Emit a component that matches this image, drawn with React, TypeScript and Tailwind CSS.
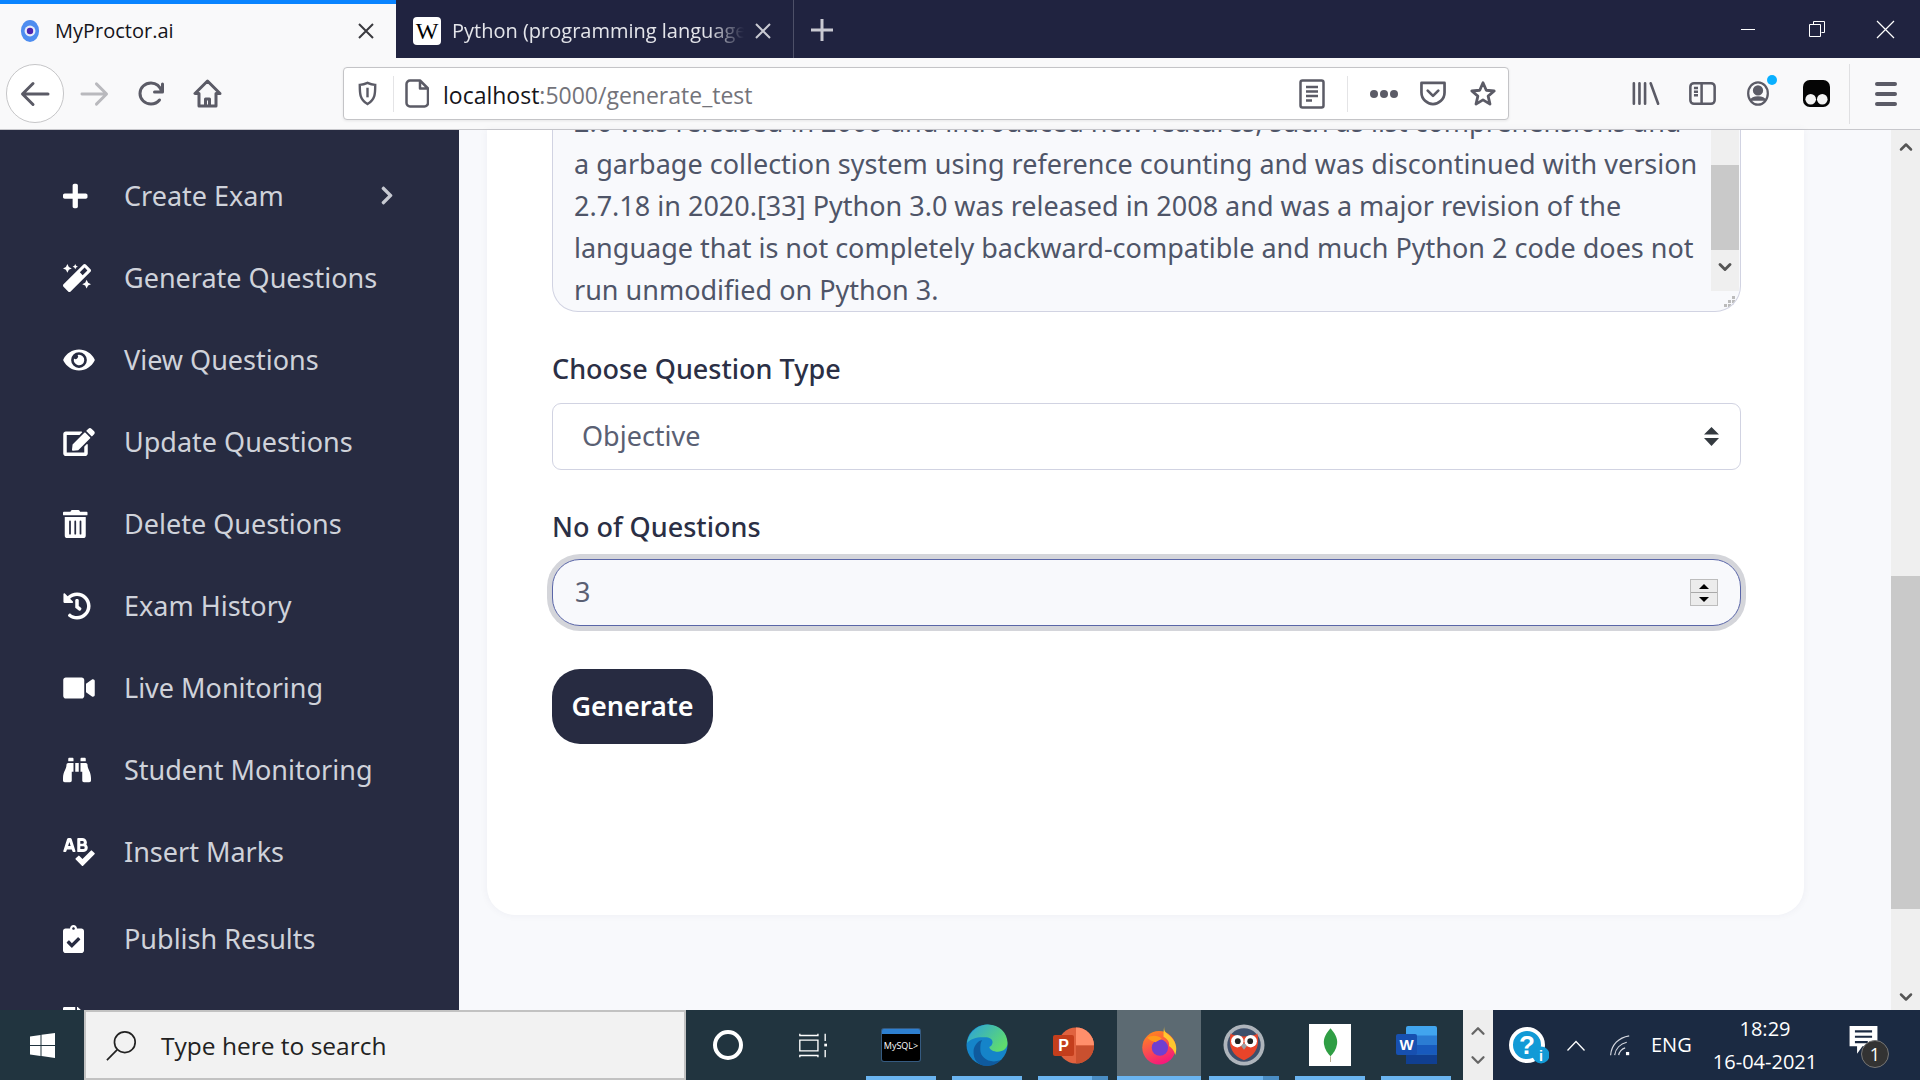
import type { ReactNode } from "react";
import {
  FaPlus,
  FaMagic,
  FaEye,
  FaEdit,
  FaTrashAlt,
  FaHistory,
  FaVideo,
  FaBinoculars,
  FaSpellCheck,
  FaClipboardCheck,
  FaChevronRight,
  FaFileAlt,
} from "react-icons/fa";
import { ChevronUp, ChevronDown } from "lucide-react";

const font = "font-['Noto_Sans','Open_Sans',sans-serif]";

const menu = [
  { icon: FaPlus, size: "h-[28px] w-[24.5px]", label: "Create Exam", arrow: true },
  { icon: FaMagic, size: "h-[28px] w-[28px]", label: "Generate Questions" },
  { icon: FaEye, size: "h-[28px] w-[32px]", label: "View Questions" },
  { icon: FaEdit, size: "h-[28px] w-[32px]", label: "Update Questions" },
  { icon: FaTrashAlt, size: "h-[28px] w-[24.5px]", label: "Delete Questions" },
  { icon: FaHistory, size: "h-[28px] w-[28px]", label: "Exam History" },
  { icon: FaVideo, size: "h-[28px] w-[32px]", label: "Live Monitoring" },
  { icon: FaBinoculars, size: "h-[28px] w-[28px]", label: "Student Monitoring" },
  { icon: FaSpellCheck, size: "h-[28px] w-[32px]", label: "Insert Marks" },
];

const lines = [
  "2.6 was released in 2000 and introduced new features, such as list comprehensions and",
  "a garbage collection system using reference counting and was discontinued with version",
  "2.7.18 in 2020.[33] Python 3.0 was released in 2008 and was a major revision of the",
  "language that is not completely backward-compatible and much Python 2 code does not",
  "run unmodified on Python 3.",
];

function TabBar() {
  return (
    <div className="flex h-[58px] shrink-0 items-stretch bg-[#202340] font-['Open_Sans',sans-serif] text-[20px]">
      <div className="flex w-[396px] items-center border-t-[4px] border-[#0a84ff] bg-[#f9f9fa] pl-[20px] pr-[21px] text-[#15141a]">
        <svg width="20" height="24" viewBox="0 0 22 26">
          <ellipse cx="11" cy="13" rx="10" ry="12" fill="#4d8df0" />
          <circle cx="11" cy="13" r="6" fill="#e8edf8" />
          <circle cx="11" cy="13" r="3.5" fill="#4a22b0" />
        </svg>
        <span className="ml-[15px] flex-1">MyProctor.ai</span>
        <svg width="18" height="18" viewBox="0 0 18 18" stroke="#3a3a3f" strokeWidth="2">
          <path d="M2 2l14 14M16 2L2 16" />
        </svg>
      </div>
      <div className="flex w-[398px] items-center border-r border-[#4d5068] pl-[17px] pr-[20px] pt-[3px] text-[#e4e5ea]">
        <div className="flex h-[28px] w-[28px] items-center justify-center rounded-[4px] bg-white font-['Liberation_Serif',serif] text-[24px] text-black">
          W
        </div>
        <span className="ml-[11px] w-[292px] overflow-hidden whitespace-nowrap [mask-image:linear-gradient(to_right,black_88%,transparent)]">
          Python (programming language) - Wikipedia
        </span>
        <svg className="ml-[10px]" width="18" height="18" viewBox="0 0 18 18" stroke="#c9cad2" strokeWidth="2">
          <path d="M2 2l14 14M16 2L2 16" />
        </svg>
      </div>
      <div className="flex w-[56px] items-center justify-center pt-[2px]">
        <svg width="24" height="24" viewBox="0 0 24 24" stroke="#c9cad2" strokeWidth="3">
          <path d="M12 1v22M1 12h22" />
        </svg>
      </div>
      <div className="ml-auto flex items-center">
        <div className="flex w-[69px] justify-center">
          <div className="h-px w-[14px] bg-white" />
        </div>
        <div className="flex w-[69px] justify-center">
          <svg width="16" height="16" viewBox="0 0 16 16" fill="none" stroke="#fff">
            <path d="M4.5 3V.5h11v11H12.5M.5 3.5h11v12H.5z" />
          </svg>
        </div>
        <div className="flex w-[69px] justify-center">
          <svg width="19" height="19" viewBox="0 0 19 19" stroke="#fff" strokeWidth="1.2">
            <path d="M1 1l17 17M18 1L1 18" />
          </svg>
        </div>
      </div>
    </div>
  );
}

function Toolbar() {
  const gray = "#5b5b66";
  return (
    <div className="flex h-[72px] shrink-0 items-center border-b border-[#c8c8cc] bg-[#f9f9fa]">
      <div className="ml-[6px] flex h-[59px] w-[58px] shrink-0 items-center justify-center rounded-full border border-[#c6c6c8] bg-white">
        <svg width="30" height="26" viewBox="0 0 30 26" fill="none" stroke={gray} strokeWidth="3" strokeLinecap="round" strokeLinejoin="round">
          <path d="M28 13H3M13 2.5L2.5 13 13 23.5" />
        </svg>
      </div>
      <svg className="ml-[16px]" width="29" height="26" viewBox="0 0 30 26" fill="none" stroke="#b9b9bd" strokeWidth="3" strokeLinecap="round" strokeLinejoin="round">
        <path d="M2 13h25M17 2.5L27.5 13 17 23.5" />
      </svg>
      <svg className="ml-[29px]" width="27" height="25" viewBox="0 0 27 25" fill="none" stroke={gray} strokeWidth="3" strokeLinecap="round" strokeLinejoin="round">
        <path d="M24.5 3v8h-8M24 11C22 5 17.5 2 13 2 7 2 2 6.5 2 12.500S7 23 13 23c3.5 0 6.5-1.5 8.5-4" />
      </svg>
      <svg className="ml-[28px]" width="29" height="29" viewBox="0 0 29 29" fill="none" stroke={gray} strokeWidth="3" strokeLinejoin="round">
        <path d="M14.5 2L2 14.5h4V27h17V14.5h4zM12.5 27v-7h4v7" />
      </svg>
      <div className="ml-[121px] flex h-[53px] w-[1166px] shrink-0 items-center rounded-[4px] border border-[#c4c4c7] bg-white shadow-[0_1px_3px_rgba(0,0,0,0.08)]">
        <svg className="ml-[13px]" width="21" height="25" viewBox="0 0 20 26" fill="none" stroke={gray} strokeWidth="2.5">
          <path d="M10 2c3 1.5 5 2 8 2 0 8 .5 15-8 20C1.5 19 2 12 2 4c3 0 5-.5 8-2z" />
          <path d="M10 7v10" />
        </svg>
        <div className="ml-[15px] h-[36px] w-px bg-[#e4e4e6]" />
        <svg className="ml-[11px]" width="24" height="29" viewBox="0 0 24 29" fill="none" stroke={gray} strokeWidth="2.5" strokeLinejoin="round">
          <path d="M5 1.5h10l8 8V24a3.500 3.500 0 0 1-3.500 3.500H5A3.500 3.500 0 0 1 1.500 24V5A3.500 3.500 0 0 1 5 1.500zM15 1.500v8h8" />
        </svg>
        <span className="ml-[14px] flex-1 pt-[3px] font-['Open_Sans',sans-serif] text-[23px] leading-none text-[#15141a]">
          localhost<span className="text-[#73737a]">:5000/generate_test</span>
        </span>
        <svg width="26" height="30" viewBox="0 0 26 30" fill="none" stroke={gray} strokeWidth="2.5">
          <rect x="1.5" y="1.5" width="23" height="27" rx="2" />
          <path d="M7 8h12M7 12.500h12M7 17h12M7 21.500h6" />
        </svg>
        <div className="ml-[22px] h-[36px] w-px bg-[#e4e4e6]" />
        <div className="ml-[22px] flex gap-[2px]">
          <div className="h-[8px] w-[8px] rounded-full bg-[#5b5b66]" />
          <div className="h-[8px] w-[8px] rounded-full bg-[#5b5b66]" />
          <div className="h-[8px] w-[8px] rounded-full bg-[#5b5b66]" />
        </div>
        <svg className="ml-[21px]" width="28" height="25" viewBox="0 0 28 26" fill="none" stroke={gray} strokeWidth="2.8" strokeLinejoin="round">
          <path d="M2 2h24v10c0 7-6 12-12 12S2 19 2 12z" />
          <path d="M8.500 10L14 15.500 19.500 10" strokeLinecap="round" />
        </svg>
        <svg className="ml-[21px] mr-[10px]" width="30" height="28" viewBox="0 0 30 30" fill="none" stroke={gray} strokeWidth="3" strokeLinejoin="round">
          <path d="M15 3l3.500 8 8.500.8-6.500 5.500 2 8.500-7.500-4.500-7.500 4.500 2-8.500L3 11.800l8.500-.8z" />
        </svg>
      </div>
      <svg className="ml-[123px]" width="28" height="25" viewBox="0 0 30 26" fill="none" stroke={gray} strokeWidth="2.8" strokeLinecap="round">
        <path d="M2 2v22M8 2v22M14 2v22M20 2l8 22" />
      </svg>
      <svg className="ml-[29px]" width="27" height="25" viewBox="0 0 30 26" fill="none" stroke={gray} strokeWidth="2.8">
        <rect x="1.5" y="1.5" width="27" height="23" rx="4" />
        <path d="M14 2v22M5.500 7H10M5.500 11H10M5.500 15H10" />
      </svg>
      <div className="relative ml-[30px] h-[25px] w-[24px]">
        <svg width="24" height="25" viewBox="0 0 26 28" fill="none" stroke={gray} strokeWidth="2.5">
          <ellipse cx="13" cy="14" rx="11" ry="12.5" />
          <circle cx="13" cy="10.5" r="4.5" fill={gray} />
          <path d="M5 22c2-5 14-5 16 0" fill={gray} />
        </svg>
        <div className="absolute right-[-7px] top-[-6px] h-[10px] w-[10px] rounded-full bg-[#0ab0ff]" />
      </div>
      <svg className="ml-[33px]" width="27" height="27" viewBox="0 0 28 28">
        <rect x="0" y="0" width="28" height="28" rx="7" fill="#050505" />
        <circle cx="8" cy="20" r="5.5" fill="#f4f4f4" />
        <circle cx="20" cy="20" r="5.5" fill="#f4f4f4" />
      </svg>
      <div className="ml-[19px] h-[60px] w-px bg-[#e0e0e2]" />
      <div className="ml-[25px] flex w-[22px] flex-col gap-[6px]">
        <div className="h-[4px] rounded bg-[#5b5b66]" />
        <div className="h-[4px] rounded bg-[#5b5b66]" />
        <div className="h-[4px] rounded bg-[#5b5b66]" />
      </div>
    </div>
  );
}

function Sidebar() {
  return (
    <aside className={`w-[459px] shrink-0 overflow-hidden bg-[#272b41] pt-[25px] text-[#cfd2da] ${font}`}>
      {menu.map((item) => (
        <div key={item.label} className="flex h-[82px] items-center pl-[63px] text-[27px]">
          <div className="flex w-[61px] shrink-0">
            <item.icon className={`${item.size} text-white`} />
          </div>
          <span className="w-[256px] whitespace-nowrap">{item.label}</span>
          {item.arrow && <FaChevronRight className="-mt-[2px] h-[21px] w-[14px] text-[#c7cad2]" />}
        </div>
      ))}
      <div className="mt-[5px] flex h-[82px] items-center pl-[63px] text-[27px]">
        <div className="flex w-[61px] shrink-0">
          <FaClipboardCheck className="h-[28px] w-[21px] text-white" />
        </div>
        <span>Publish Results</span>
      </div>
      <div className="flex h-[82px] items-center pl-[63px] text-[27px]">
        <div className="flex w-[61px] shrink-0">
          <FaFileAlt className="h-[28px] w-[21px] text-white" />
        </div>
        <span>Results</span>
      </div>
    </aside>
  );
}

function ExamForm() {
  return (
    <div className={`flex h-[785px] w-[1317px] flex-col rounded-b-[28px] bg-white pl-[65px] pr-[63px] text-[#2b2f45] shadow-[0_0_8px_rgba(40,45,70,0.05)] ${font}`}>
      <div className="relative flex h-[182px] shrink-0 flex-col justify-end overflow-hidden rounded-b-[26px] border-x border-b border-[#d1d3e2] bg-[#f8f9fc] pl-[21px] text-[27px] leading-[42px] text-[#4f5568]">
        {lines.map((line) => (
          <div key={line} className="whitespace-nowrap">
            {line}
          </div>
        ))}
        <div className="absolute right-[1px] top-0 flex h-[161px] w-[28px] flex-col bg-[#efefef]">
          <div className="mt-[35px] h-[85px] bg-[#c9c9c9]" />
          <ChevronDown className="mx-auto mt-[7px] h-[20px] w-[20px] text-[#555]" strokeWidth={3.5} />
        </div>
        <svg className="absolute bottom-[3px] right-[4px]" width="12" height="12" viewBox="0 0 12 12" fill="#bbb">
          <rect x="8" y="0" width="3" height="3" />
          <rect x="4" y="4" width="3" height="3" />
          <rect x="8" y="4" width="3" height="3" />
          <rect x="0" y="8" width="3" height="3" />
          <rect x="4" y="8" width="3" height="3" />
          <rect x="8" y="8" width="3" height="3" />
        </svg>
      </div>

      <label className="mt-[39px] text-[27px] font-medium leading-[36px]">Choose Question Type</label>
      <div className="mt-[16px] flex h-[67px] shrink-0 items-center justify-between rounded-[9px] border border-[#d1d3e2] bg-white pl-[29px] pr-[21px] text-[27px] text-[#5a6073]">
        <span>Objective</span>
        <svg width="15" height="19" viewBox="0 0 15 19" fill="#343a40">
          <path d="M7.5 0L15 7.5H0zM0 11h15l-7.5 8z" />
        </svg>
      </div>

      <label className="mt-[39px] text-[27px] font-medium leading-[36px]">No of Questions</label>
      <div className="mt-[14px] flex h-[67px] shrink-0 items-center justify-between rounded-[28px] border border-[#5a66a8] bg-[#f8f9fc] pl-[22px] pr-[22px] text-[27px] text-[#5a6073] shadow-[0_0_0_5px_#d4d5da]">
        <span>3</span>
        <div className="flex h-[27px] w-[28px] flex-col border border-[#bdbdbd] bg-[#ececec]">
          <div className="flex flex-1 items-center justify-center border-b border-[#a9a9a9]">
            <div className="h-0 w-0 border-x-[5px] border-b-[5px] border-x-transparent border-b-black" />
          </div>
          <div className="flex flex-1 items-center justify-center">
            <div className="h-0 w-0 border-x-[5px] border-t-[5px] border-x-transparent border-t-black" />
          </div>
        </div>
      </div>

      <button className="mt-[43px] flex h-[75px] w-[161px] items-center justify-center rounded-[28px] bg-[#272b41] text-[27px] font-semibold text-white">
        Generate
      </button>
    </div>
  );
}

function PageScrollbar() {
  return (
    <div className="flex w-[29px] shrink-0 flex-col items-center bg-[#efefef]">
      <ChevronUp className="mt-[7px] h-[20px] w-[20px] text-[#555]" strokeWidth={3} />
      <div className="mt-[419px] h-[333px] w-full bg-[#c9c9c9]" />
      <ChevronDown className="mt-[78px] h-[20px] w-[20px] text-[#555]" strokeWidth={3} />
    </div>
  );
}

function TaskCell({ tail, children }: { tail?: boolean; children: ReactNode }) {
  return (
    <div className="relative flex w-[86px] items-center justify-center">
      {children}
      <div className="absolute bottom-0 left-[8px] right-[8px] flex h-[4px] justify-end bg-[#6ab4f0]">
        {tail && <div className="h-full w-[16px] bg-[#4a8dc4]" />}
      </div>
    </div>
  );
}

function Taskbar() {
  return (
    <div className="flex h-[70px] shrink-0 items-stretch bg-[#21343f] font-['Open_Sans',sans-serif] text-white">
      <div className="flex w-[84px] items-center justify-center">
        <svg width="25" height="25" viewBox="0 0 25 25" fill="#fff">
          <path d="M0 3.5L10.5 2v10H0zM11.5 1.8L25 0v12H11.500zM0 13h10.500v10L0 21.500zM11.500 13H25v12l-13.500-1.900z" />
        </svg>
      </div>
      <div className="flex w-[602px] items-center border-2 border-[#c2c2c2] bg-[#f2f2f2] pl-[20px] text-[24.5px] text-[#222]">
        <svg width="32" height="32" viewBox="0 0 34 34" fill="none" stroke="#222" strokeWidth="1.8">
          <circle cx="20" cy="14" r="11" />
          <path d="M12 22L1 33" />
        </svg>
        <span className="ml-[23px] pt-[3px]">Type here to search</span>
      </div>
      <div className="flex w-[84px] items-center justify-center">
        <div className="h-[30px] w-[30px] rounded-full border-[4px] border-white" />
      </div>
      <div className="mr-[3px] flex w-[85px] items-center justify-center">
        <svg width="29" height="27" viewBox="0 0 32 28" fill="none" stroke="#fff" strokeWidth="1.5">
          <path d="M2 1v2h20V1M2 8h20v12H2zM2 27v-2h20v2M30 1v8M30 19v8" />
          <rect x="29" y="12" width="3" height="3" fill="#fff" stroke="none" />
        </svg>
      </div>
      <TaskCell>
        <div className="h-[32px] w-[38px] rounded-[2px] border-t-[5px] border-[#2d7fd0] bg-black text-center text-[9px] leading-[24px] text-white shadow-[0_0_0_1px_#355a80]">
          MySQL&gt;
        </div>
      </TaskCell>
      <TaskCell>
        <svg width="42" height="42" viewBox="0 0 44 44">
          <defs>
            <linearGradient id="edgeTop" x1="0" y1="0" x2="1" y2="0.6">
              <stop offset="0" stopColor="#2a9fe0" />
              <stop offset="1" stopColor="#5fdc6e" />
            </linearGradient>
          </defs>
          <circle cx="22" cy="22" r="21.5" fill="#1584c9" />
          <path d="M1 20C3 7 14 .5 23 .5c12 0 20.5 9 20.5 19.5 0 6-5 9-10 9-5 0-9-2.5-9-5 4-1 6-9-3-10C13 13 5 15 1 20z" fill="url(#edgeTop)" />
          <path d="M15 27c0 8 9 15 21 11-3 4-9 6-14 6-9 0-15-6-14-17 1-5 5-10 9-10-2 2-2 6-2 10z" fill="#0f5a9e" />
        </svg>
      </TaskCell>
      <TaskCell tail>
        <svg width="41" height="37" viewBox="0 0 41 37">
          <circle cx="23" cy="18.5" r="18" fill="#e0623f" />
          <path d="M23 .5a18 18 0 0 1 18 18H23z" fill="#ff8f6b" />
          <path d="M23 18.5h18a18 18 0 0 1-18 18z" fill="#c9502f" />
          <rect x="0" y="8" width="21" height="21" rx="2" fill="#c43e1c" />
          <text x="10.5" y="24" fontSize="16" fontWeight="700" fill="#fff" textAnchor="middle" fontFamily="Liberation Sans">P</text>
        </svg>
      </TaskCell>
      <div className="relative ml-[1px] flex w-[84px] items-center justify-center bg-[#5c6a72]">
        <svg width="38" height="40" viewBox="0 0 42 44">
          <defs>
            <linearGradient id="foxBody" x1="0.2" y1="0" x2="0.6" y2="1">
              <stop offset="0" stopColor="#ff8a1c" />
              <stop offset="1" stopColor="#f5167e" />
            </linearGradient>
          </defs>
          <circle cx="21" cy="25" r="18.5" fill="url(#foxBody)" />
          <path d="M27 1c-1 5 1 7 5 10 7 6 10 13 7 22-1-5-4-8-7-10 1-4-2-8-6-10 0-5 0-8 1-12z" fill="#ffc72e" />
          <circle cx="22" cy="25" r="9" fill="#6f3fd0" />
          <path d="M8 14c5-3 12-3 16 1l-7 4c-3-1-6-2-9-5z" fill="#ff9a1c" />
        </svg>
        <div className="absolute bottom-0 left-0 right-0 h-[4px] bg-[#6ab4f0]" />
      </div>
      <TaskCell tail>
        <svg width="42" height="42" viewBox="0 0 44 44">
          <circle cx="22" cy="22" r="21.5" fill="#aeb4bb" />
          <circle cx="22" cy="22" r="17.5" fill="#3d4f6b" />
          <path d="M8 10c5 4 23 4 28 0 2 10 1 22-14 28C7 32 6 20 8 10z" fill="#e8442a" />
          <circle cx="15" cy="18" r="6.5" fill="#fff" />
          <circle cx="29" cy="18" r="6.5" fill="#fff" />
          <circle cx="15.5" cy="18" r="3" fill="#222" />
          <circle cx="28.5" cy="18" r="3" fill="#222" />
          <path d="M22 20l-3 3 3 4 3-4z" fill="#9aa0a6" />
        </svg>
      </TaskCell>
      <TaskCell>
        <div className="flex h-[42px] w-[42px] items-center justify-center bg-white">
          <svg width="15" height="34" viewBox="0 0 16 36">
            <path d="M8 0c4 5 8 10 7 17-1 6-4 10-7 13-3-3-6-7-7-13C0 10 4 5 8 0z" fill="#2f9e44" />
            <path d="M7.5 30h1v6h-1z" fill="#b5a98a" />
          </svg>
        </div>
      </TaskCell>
      <TaskCell>
        <svg width="41" height="38" viewBox="0 0 41 38">
          <rect x="10" y="0" width="31" height="38" rx="2" fill="#41a5ee" />
          <rect x="10" y="9.5" width="31" height="9.5" fill="#2b7cd3" />
          <rect x="10" y="19" width="31" height="9.5" fill="#185abd" />
          <rect x="10" y="28.5" width="31" height="9.5" fill="#103f91" />
          <rect x="0" y="8" width="21" height="21" rx="2" fill="#1750b0" />
          <text x="10.5" y="24" fontSize="15" fontWeight="700" fill="#fff" textAnchor="middle" fontFamily="Liberation Sans">W</text>
        </svg>
      </TaskCell>
      <div className="ml-[4px] flex w-[30px] flex-col items-center justify-around bg-[#eeeeee] py-[6px] text-[#666]">
        <ChevronUp className="h-[22px] w-[22px]" strokeWidth={2.5} />
        <ChevronDown className="h-[22px] w-[22px]" strokeWidth={2.5} />
      </div>
      <div className="flex flex-1 items-center bg-[#1b2a42]">
        <svg className="ml-[16px]" width="40" height="37" viewBox="0 0 40 37">
          <circle cx="18" cy="18" r="16" fill="#129ad6" stroke="#fff" strokeWidth="4" />
          <text x="18" y="27" fontSize="26" fontWeight="700" fill="#fff" textAnchor="middle" fontFamily="Liberation Sans">?</text>
          <circle cx="32" cy="28" r="8.5" fill="#129ad6" />
          <text x="32" y="33.5" fontSize="14" fontWeight="700" fill="#fff" textAnchor="middle" fontFamily="Liberation Sans">i</text>
        </svg>
        <svg className="ml-[18px]" width="18" height="11" viewBox="0 0 18 11" fill="none" stroke="#fff" strokeWidth="1.3">
          <path d="M.5 10.5L9 1.5l8.5 9" />
        </svg>
        <svg className="ml-[24px]" width="21" height="21" viewBox="0 0 26 26" fill="none" stroke="#d5d8e0" strokeWidth="1.5">
          <path d="M2 25C3 12 12 3 25 1M7 25c1-8 7-14 15-16M12 25c.5-4 4-8 8-9" />
          <rect x="21" y="21" width="4" height="4" fill="#fff" stroke="none" />
        </svg>
        <span className="ml-[21px] w-[40px] text-[20px]">ENG</span>
        <div className="ml-[24px] flex w-[100px] flex-col items-center text-[20px] leading-[33px]">
          <span>18:29</span>
          <span className="whitespace-nowrap">16-04-2021</span>
        </div>
        <div className="relative ml-[34px] -mt-[8px] h-[30px] w-[29px]">
          <svg width="29" height="30" viewBox="0 0 26 28" fill="#fff">
            <path d="M0 0h26v19H12l-5 7v-7H0z" />
            <path d="M5 5h16M5 10h16M5 15h12" stroke="#1b2a42" strokeWidth="2" />
          </svg>
          <div className="absolute bottom-[-12px] right-[-11px] flex h-[28px] w-[28px] items-center justify-center rounded-full border border-[#777] bg-[#333] text-[18px]">
            1
          </div>
        </div>
      </div>
    </div>
  );
}

export default function App() {
  return (
    <div className="flex h-screen flex-col overflow-hidden">
      <TabBar />
      <Toolbar />
      <main className="flex min-h-0 flex-1">
        <Sidebar />
        <div className="flex flex-1 bg-[#f8f9fc]">
          <div className="flex-1 pl-[28px]">
            <ExamForm />
          </div>
          <PageScrollbar />
        </div>
      </main>
      <Taskbar />
    </div>
  );
}
